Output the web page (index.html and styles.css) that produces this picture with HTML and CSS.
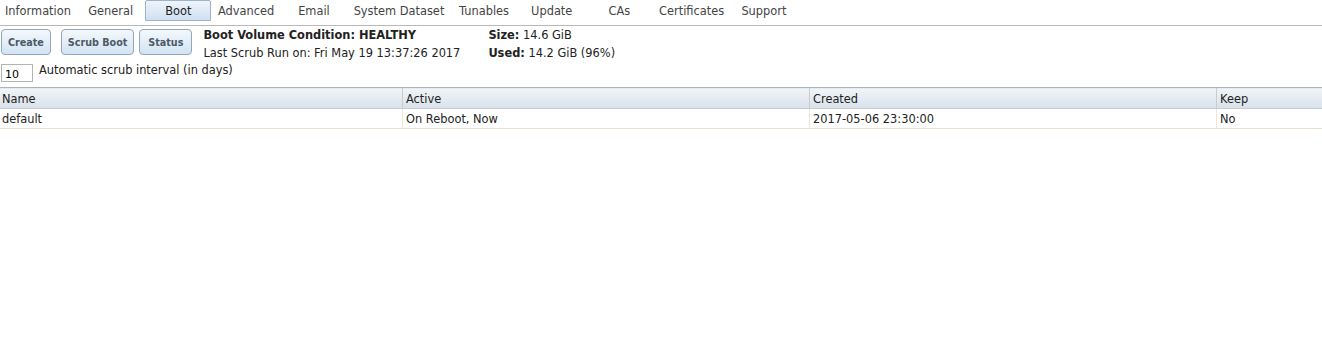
FILE: index.html
```html
<!DOCTYPE html>
<html lang="en">
<head>
    <meta charset="UTF-8">
    <title>System - Boot</title>
    <link rel="stylesheet" href="styles.css">
</head>
<body>
    <nav class="tabs">
        <span class="tab">Information</span>
        <span class="tab">General</span>
        <span class="tab active">Boot</span>
        <span class="tab">Advanced</span>
        <span class="tab">Email</span>
        <span class="tab">System Dataset</span>
        <span class="tab">Tunables</span>
        <span class="tab">Update</span>
        <span class="tab">CAs</span>
        <span class="tab">Certificates</span>
        <span class="tab">Support</span>
    </nav>

    <div class="toolbar">
        <div class="buttons">
            <button class="btn">Create</button>
            <button class="btn btn-wide">Scrub Boot</button>
            <button class="btn btn-status">Status</button>
        </div>
        <div class="status">
            <p><b>Boot Volume Condition: HEALTHY</b></p>
            <p>Last Scrub Run on: Fri May 19 13:37:26 2017</p>
        </div>
        <div class="status">
            <p><b>Size:</b> 14.6 GiB</p>
            <p><b>Used:</b> 14.2 GiB (96%)</p>
        </div>
    </div>

    <div class="interval">
        <input type="text" value="10">
        <label>Automatic scrub interval (in days)</label>
    </div>

    <table class="grid">
        <thead>
            <tr>
                <th class="name">Name</th>
                <th>Active</th>
                <th>Created</th>
                <th class="keep">Keep</th>
            </tr>
        </thead>
        <tbody>
            <tr>
                <td>default</td>
                <td>On Reboot, Now</td>
                <td>2017-05-06 23:30:00</td>
                <td class="keep">No</td>
            </tr>
        </tbody>
    </table>
</body>
</html>
```

FILE: styles.css
```css
body {
    font-family: "DejaVu Sans", Verdana, sans-serif;
    font-size: 11px;
    color: #222;
    margin: 0;
    background-color: #fff;
}
.tabs {
    display: flex;
    height: 26px;
    border-bottom: 1px solid #b8b8b8;
    box-sizing: border-box;
}
.tab {
    min-width: 66px;
    box-sizing: border-box;
    padding: 3px 4px 0;
    margin-right: 1.7px;
    height: 21px;
    text-align: center;
    color: #444;
    font-size: 11.4px;
    border: 1px solid transparent;
}
.tab.active {
    background: linear-gradient(#eef4fb, #cfe0f2);
    border-color: #9fb3c8;
    border-radius: 2px 2px 0 0;
    color: #222;
}
.toolbar {
    display: flex;
    padding: 3px 0 0 1px;
    height: 34px;
}
.buttons {
    display: flex;
}
.btn {
    font-family: inherit;
    font-size: 9.6px;
    font-weight: bold;
    color: #4d5a66;
    height: 26px;
    padding: 0 6px;
    margin-right: 4px;
    background: linear-gradient(#f4f8fc, #d2e3f4);
    border: 1px solid #93a6ba;
    border-radius: 4px;
}
.btn-wide {
    margin-left: 6px;
}
.btn-status {
    margin-left: 1px;
    padding: 0 8px;
}
.status {
    margin-left: 7px;
    margin-right: 21px;
    font-size: 11.4px;
}
.status p {
    margin: 0 0 5px;
    line-height: 13px;
}
.interval {
    display: flex;
    align-items: center;
    padding: 0 0 0 1px;
    height: 20px;
}
.interval input {
    width: 32px;
    height: 18px;
    box-sizing: border-box;
    border: 1px solid #b4b4b4;
    font-family: inherit;
    font-size: 11px;
    padding: 2px 3px 0;
    margin: 0 6px 0 0;
}
.interval label {
    font-size: 11.4px;
    margin-top: -6px;
}
.grid {
    width: 100%;
    table-layout: fixed;
    border-collapse: collapse;
    margin-top: 4px;
    font-size: 11.4px;
}
.grid th {
    text-align: left;
    font-weight: normal;
    height: 19px;
    padding: 1px 3px 0;
    background: linear-gradient(#f2f5f8, #d9e1ea);
    border-top: 1px solid #a9b4bf;
    border-bottom: 1px solid #c4ccd5;
    border-left: 1px solid #c4ccd5;
    width: 400px;
}
.grid th.name {
    width: 397px;
}
.grid th:first-child,
.grid td:first-child {
    border-left: none;
    padding-left: 2px;
}
.grid th.keep {
    width: auto;
}
.grid td {
    height: 19px;
    padding: 0 3px;
    border-left: 1px solid #efe6d6;
    border-bottom: 1px solid #eadfcc;
}
```
